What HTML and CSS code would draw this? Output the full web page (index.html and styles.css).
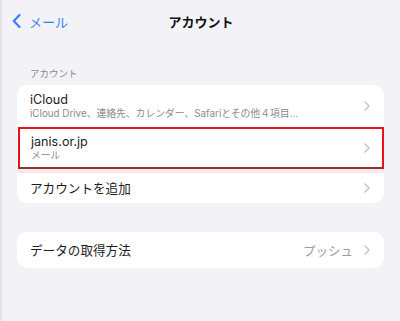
FILE: index.html
```html
<!DOCTYPE html>
<html lang="ja">
	<head>
		<meta charset="UTF-8">
		<meta name="viewport" content="width=device-width, initial-scale=1.0">
		<title>アカウント</title>
		<link rel="stylesheet" href="styles.css">
	</head>
	<body>
		<div class="screen">
			<header class="navbar">
				<a class="back" href="#">
					<svg class="back-icon" viewBox="0 0 9 14" width="9" height="14">
						<path d="M7.5 1 L1.8 7 L7.5 13" fill="none" stroke="currentColor" stroke-width="2.2" stroke-linecap="round" stroke-linejoin="round"/>
					</svg>
					<span>メール</span>
				</a>
				<h1 class="title">アカウント</h1>
				<div></div>
			</header>

			<div class="section-label">アカウント</div>
			<div class="card">
				<div class="row row-tall">
					<div class="row-main">
						<div class="row-title">iCloud</div>
						<div class="row-sub">iCloud Drive、連絡先、カレンダー、Safariとその他４項目...</div>
					</div>
					<svg class="chevron" viewBox="0 0 6 10" width="6" height="10"><path d="M1 1 L5 5 L1 9" /></svg>
				</div>
				<div class="row row-tall row-selected">
					<div class="row-main">
						<div class="row-title">janis.or.jp</div>
						<div class="row-sub">メール</div>
					</div>
					<svg class="chevron" viewBox="0 0 6 10" width="6" height="10"><path d="M1 1 L5 5 L1 9" /></svg>
				</div>
				<div class="highlight-strip"></div>
				<div class="row row-short">
					<div class="row-main">
						<div class="row-title">アカウントを追加</div>
					</div>
					<svg class="chevron" viewBox="0 0 6 10" width="6" height="10"><path d="M1 1 L5 5 L1 9" /></svg>
				</div>
			</div>

			<div class="card card-gap">
				<div class="row row-single">
					<div class="row-main">
						<div class="row-title">データの取得方法</div>
					</div>
					<span class="row-value">プッシュ</span>
					<svg class="chevron" viewBox="0 0 6 10" width="6" height="10"><path d="M1 1 L5 5 L1 9" /></svg>
				</div>
			</div>
		</div>
	</body>
</html>
```

FILE: styles.css
```css
body {
    margin: 0;
    background-color: #f2f2f7;
    color: #1c1c1e;
    font-family: "Inter", "Noto Sans CJK JP", sans-serif;
}

.screen {
    height: 321px;
    border-left: 2px solid #e4e4e9;
    box-sizing: border-box;
    overflow: hidden;
}

.navbar {
    height: 42px;
    display: grid;
    grid-template-columns: 1fr auto 1fr;
    align-items: center;
    padding: 0 10px;
}

.back {
    display: flex;
    align-items: center;
    gap: 8px;
    color: #3580f4;
    text-decoration: none;
    font-size: 13px;
}

.title {
    margin: 0;
    font-size: 13px;
    font-weight: 700;
    color: #111111;
}

.section-label {
    margin: 26px 0 5px 28px;
    font-size: 9.5px;
    line-height: 12px;
    color: #8a8a8e;
}

.card {
    margin: 0 16px 0 15px;
    background-color: #ffffff;
    border-radius: 10px;
    overflow: hidden;
}

.card-gap {
    margin-top: 29px;
}

.row {
    display: flex;
    align-items: center;
    padding: 0 14px 0 13px;
    box-sizing: border-box;
}

.row-tall {
    height: 42px;
}

.row-short {
    height: 30px;
}

.row-single {
    height: 36px;
}

.row-selected {
    border: 2px solid #e8101a;
    border-bottom-color: #8a3a20;
    padding-left: 11px;
    padding-right: 12px;
    margin-left: 1px;
}

.highlight-strip {
    height: 4px;
    background-color: #fbe6f2;
}

.row-main {
    flex: 1;
    min-width: 0;
}

.row-title {
    font-size: 12.6px;
    line-height: 15px;
}

.row-sub {
    font-size: 9.8px;
    line-height: 14px;
    color: #8a8a8e;
    white-space: nowrap;
}

.row-value {
    font-size: 12.5px;
    color: #9a9a9e;
    margin-right: 11px;
}

.chevron {
    fill: none;
    stroke: #c4c4c8;
    stroke-width: 1.5;
    stroke-linecap: round;
    stroke-linejoin: round;
}
```
